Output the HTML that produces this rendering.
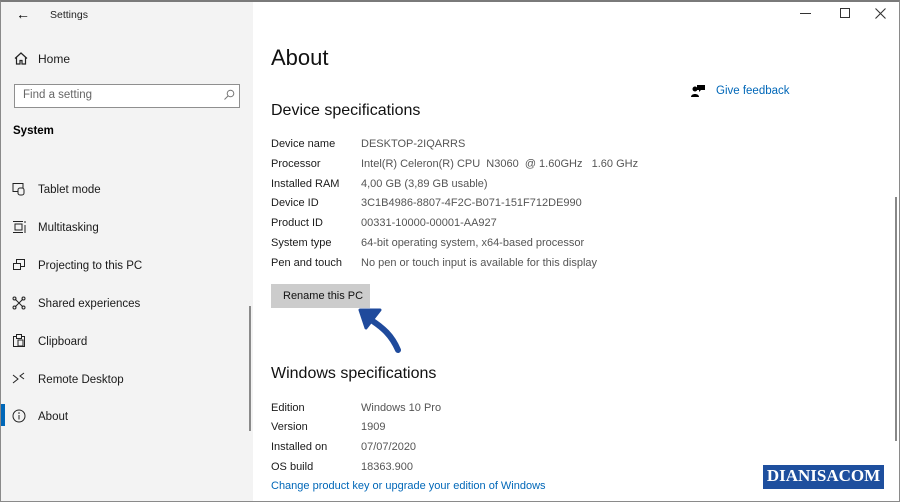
<!DOCTYPE html>
<html><head><style>
*{margin:0;padding:0;box-sizing:border-box}
body{width:900px;height:502px;overflow:hidden;font-family:"Liberation Sans",sans-serif;background:#fff;position:relative;color:#000}
.frame{position:absolute;inset:0;border:1px solid #8a8a8a;border-top:2px solid #7a7a7a}
.side{position:absolute;left:1px;top:2px;width:252px;height:499px;background:#f3f3f3}
.t{position:absolute;white-space:nowrap}
.nav{font-size:11.5px;color:#1a1a1a}
.ic{position:absolute}
.lbl{font-size:11px;color:#1a1a1a}
.val{font-size:11px;color:#555}
.link{color:#0067b8;font-size:11.5px}
</style></head><body>
<div class="side"></div>
<div class="t" style="left:16px;top:6px;font-size:14px">&#8592;</div>
<div class="t" style="left:50px;top:9px;font-size:10.5px;color:#222">Settings</div>
<svg class="ic" style="left:14px;top:52px" width="14" height="13" viewBox="0 0 14 13"><path d="M1 6.5L7 1l6 5.5M2.5 5.5V12h3.5V8.5h2V12h3.5V5.5" fill="none" stroke="#222" stroke-width="1.2"/></svg>
<div class="t nav" style="left:38px;top:52px;font-size:12px">Home</div>
<div style="position:absolute;left:14px;top:84px;width:226px;height:24px;border:1px solid #8f8f8f;background:#fff"></div>
<div class="t" style="left:23px;top:89px;font-size:11.5px;color:#666">Find a setting</div>
<svg class="ic" style="left:223px;top:89px" width="12" height="12"><circle cx="7.5" cy="4.5" r="3.3" fill="none" stroke="#777"/><path d="M5 7L1.5 10.5" stroke="#777"/></svg>
<div class="t" style="left:13px;top:125px;font-size:11.5px;font-weight:bold">System</div>

<svg class="ic" style="left:12px;top:182px" width="14" height="14"><rect x="1" y="1.5" width="10" height="8" fill="none" stroke="#222"/><rect x="6" y="6" width="6" height="7" rx="2" fill="#f3f3f3" stroke="#222"/></svg>
<div class="t nav" style="left:38px;top:184px">Tablet mode</div>
<svg class="ic" style="left:12px;top:220px" width="14" height="14"><path d="M1 1.5h10M1 12.5h10M3 4h7v6H3zM13 1v2M13 5v8" fill="none" stroke="#222"/></svg>
<div class="t nav" style="left:38px;top:222px">Multitasking</div>
<svg class="ic" style="left:12px;top:258px" width="14" height="14"><rect x="4.5" y="1.5" width="8" height="7" fill="none" stroke="#222"/><rect x="1.5" y="5.5" width="7" height="6" fill="#f3f3f3" stroke="#222"/></svg>
<div class="t nav" style="left:38px;top:260px">Projecting to this PC</div>
<svg class="ic" style="left:12px;top:296px" width="14" height="14"><path d="M3 3l8 8M11 3l-8 8" stroke="#222"/><circle cx="2.5" cy="2.5" r="1.5" fill="none" stroke="#222"/><circle cx="11.5" cy="2.5" r="1.5" fill="none" stroke="#222"/><circle cx="2.5" cy="11.5" r="1.5" fill="none" stroke="#222"/><circle cx="11.5" cy="11.5" r="1.5" fill="none" stroke="#222"/></svg>
<div class="t nav" style="left:38px;top:298px">Shared experiences</div>
<svg class="ic" style="left:12px;top:333px" width="14" height="15"><rect x="1.5" y="3.5" width="11" height="10" fill="none" stroke="#222"/><rect x="4.5" y="1.5" width="5" height="4" fill="#f3f3f3" stroke="#222"/><rect x="6" y="7" width="5" height="6" fill="none" stroke="#222"/></svg>
<div class="t nav" style="left:38px;top:336px">Clipboard</div>
<svg class="ic" style="left:12px;top:372px" width="14" height="14"><path d="M1 3l5 4-5 4M12 1L8 4l4 3" fill="none" stroke="#222"/></svg>
<div class="t nav" style="left:38px;top:374px">Remote Desktop</div>
<div style="position:absolute;left:1px;top:404px;width:4px;height:22px;background:#0067b8"></div>
<svg class="ic" style="left:12px;top:409px" width="14" height="14"><circle cx="7" cy="7" r="6" fill="none" stroke="#222"/><path d="M7 6v4.5" stroke="#222"/><circle cx="7" cy="4" r=".8" fill="#222"/></svg>
<div class="t nav" style="left:38px;top:411px">About</div>
<div style="position:absolute;left:249px;top:306px;width:2px;height:125px;background:#8a8a8a"></div>

<div style="position:absolute;left:800px;top:13px;width:11px;height:1px;background:#333"></div>
<div style="position:absolute;left:840px;top:8px;width:10px;height:10px;border:1px solid #333"></div>
<svg class="ic" style="left:875px;top:8px" width="11" height="11"><path d="M0.5 0.5l10 10M10.5 0.5l-10 10" stroke="#333" stroke-width="1.1"/></svg>

<div class="t" style="left:271px;top:45px;font-size:22px;color:#111">About</div>
<svg class="ic" style="left:691px;top:84px" width="14" height="14"><circle cx="4" cy="5" r="2.5" fill="#000"/><path d="M0 13c0-4 8-4 8 0z" fill="#000"/><path d="M6 1h8v5h-4l-2 2V6H6z" fill="#000"/></svg>
<div class="t link" style="left:716px;top:85px">Give feedback</div>
<div class="t" style="left:271px;top:102px;font-size:16px;color:#111">Device specifications</div>

<div class="t lbl" style="left:271px;top:138px">Device name</div><div class="t val" style="left:361px;top:138px">DESKTOP-2IQARRS</div>
<div class="t lbl" style="left:271px;top:158px">Processor</div><div class="t val" style="left:361px;top:158px">Intel(R) Celeron(R) CPU &nbsp;N3060 &nbsp;@ 1.60GHz &nbsp; 1.60 GHz</div>
<div class="t lbl" style="left:271px;top:178px">Installed RAM</div><div class="t val" style="left:361px;top:178px">4,00 GB (3,89 GB usable)</div>
<div class="t lbl" style="left:271px;top:197px">Device ID</div><div class="t val" style="left:361px;top:197px">3C1B4986-8807-4F2C-B071-151F712DE990</div>
<div class="t lbl" style="left:271px;top:217px">Product ID</div><div class="t val" style="left:361px;top:217px">00331-10000-00001-AA927</div>
<div class="t lbl" style="left:271px;top:237px">System type</div><div class="t val" style="left:361px;top:237px">64-bit operating system, x64-based processor</div>
<div class="t lbl" style="left:271px;top:257px">Pen and touch</div><div class="t val" style="left:361px;top:257px">No pen or touch input is available for this display</div>

<div style="position:absolute;left:271px;top:284px;width:99px;height:24px;background:#cccccc"></div>
<div class="t" style="left:283px;top:290px;font-size:11px;color:#111">Rename this PC</div>
<svg class="ic" style="left:352px;top:300px" width="52" height="56"><path d="M46 50C40 36 32 28 16 18" fill="none" stroke="#1f4a9c" stroke-width="6" stroke-linecap="round"/><path d="M8 10L28 10 14 28z" fill="#1f4a9c" stroke="#1f4a9c" stroke-width="3" stroke-linejoin="round"/></svg>

<div class="t" style="left:271px;top:365px;font-size:16px;color:#111">Windows specifications</div>
<div class="t lbl" style="left:271px;top:402px">Edition</div><div class="t val" style="left:361px;top:402px">Windows 10 Pro</div>
<div class="t lbl" style="left:271px;top:421px">Version</div><div class="t val" style="left:361px;top:421px">1909</div>
<div class="t lbl" style="left:271px;top:441px">Installed on</div><div class="t val" style="left:361px;top:441px">07/07/2020</div>
<div class="t lbl" style="left:271px;top:461px">OS build</div><div class="t val" style="left:361px;top:461px">18363.900</div>
<div class="t link" style="left:271px;top:480px;font-size:11px">Change product key or upgrade your edition of Windows</div>

<div style="position:absolute;left:895px;top:197px;width:2px;height:244px;background:#888"></div>
<div style="position:absolute;left:763px;top:465px;width:121px;height:24px;background:#1e4f9e"></div>
<div class="t" style="left:763px;top:466px;width:121px;text-align:center;font-family:'Liberation Serif',serif;font-weight:bold;font-size:17px;color:#fff">DIANISACOM</div>
<div class="frame"></div>
</body></html>
